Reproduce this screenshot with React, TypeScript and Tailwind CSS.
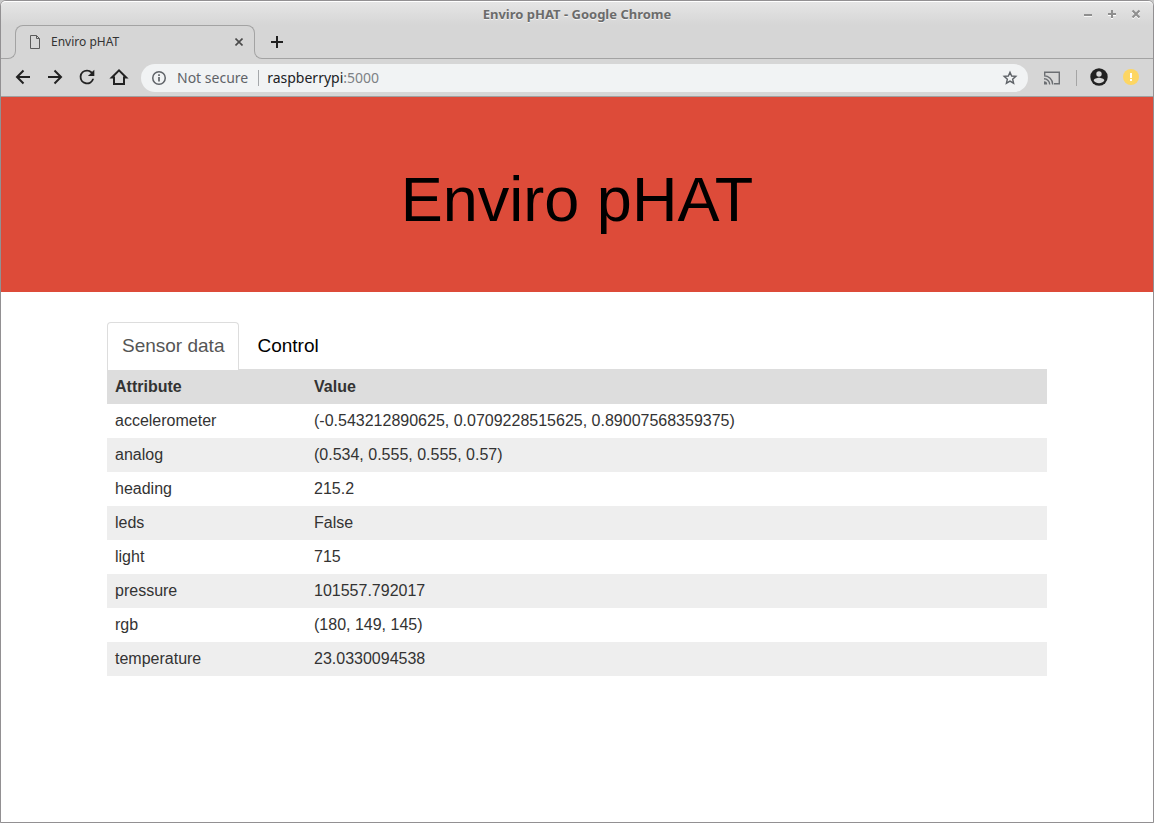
import { useState, type ReactNode } from "react";

const readings = [
  ["accelerometer", "(-0.543212890625, 0.0709228515625, 0.89007568359375)"],
  ["analog", "(0.534, 0.555, 0.555, 0.57)"],
  ["heading", "215.2"],
  ["leds", "False"],
  ["light", "715"],
  ["pressure", "101557.792017"],
  ["rgb", "(180, 149, 145)"],
  ["temperature", "23.0330094538"],
];

function IconButton({ label, children }: { label: string; children: ReactNode }) {
  return (
    <button type="button" aria-label={label} className="flex size-5 shrink-0 items-center justify-center">
      {children}
    </button>
  );
}

function WindowTitle() {
  return (
    <div className="flex h-[24px] items-center rounded-t-[5px] border-t border-white bg-linear-to-b from-[#e5e5e5] to-[#d6d6d6] px-[7px]">
      <div className="flex-1" />
      <div className="text-[13px] leading-5 font-bold text-[#6b6b6b] [text-shadow:0_1px_0_#f2f2f2]">
        Enviro pHAT - Google Chrome
      </div>
      <div className="flex flex-1 justify-end gap-1 text-[#8f8f8f]">
        <IconButton label="Minimize">
          <svg width="10" height="10" viewBox="0 0 10 10">
            <path d="M1 7h8" stroke="#fff" strokeWidth="1.5" />
            <path d="M1 6h8" stroke="currentColor" strokeWidth="2" />
          </svg>
        </IconButton>
        <IconButton label="Maximize">
          <svg width="10" height="10" viewBox="0 0 10 10">
            <path d="M1 6h8M5 2v8" stroke="#fff" strokeWidth="2" />
            <path d="M1 5h8M5 1v8" stroke="currentColor" strokeWidth="2" />
          </svg>
        </IconButton>
        <IconButton label="Close window">
          <svg width="10" height="10" viewBox="0 0 10 10">
            <path d="M1.5 2.5l7 7M8.5 2.5l-7 7" stroke="#fff" strokeWidth="2" />
            <path d="M1.5 1.500l7 7M8.5 1.500l-7 7" stroke="currentColor" strokeWidth="2.2" />
          </svg>
        </IconButton>
      </div>
    </div>
  );
}

function TabStrip() {
  return (
    <div>
      <div className="flex h-[25px] items-start pl-[14px]">
        <div className="h-full w-[240px] shrink-0 rounded-t-[8px] border-x border-t border-[#a3a3a3]">
          <div className="flex h-8 items-center pr-[5px] pl-[13px]">
            <svg width="12" height="14" viewBox="0 0 12 14" fill="none" stroke="#5a5a5a">
              <path d="M1.500 .5H7.500L10.500 3.500V13.500H1.500Z" />
              <path d="M7.500 .5V3.500H10.500" />
            </svg>
            <span className="ml-[10px] flex-1 text-[12px] leading-4 text-[#333]">Enviro pHAT</span>
            <IconButton label="Close tab">
              <svg width="8" height="8" viewBox="0 0 8 8">
                <path d="M.5 .5l7 7M7.500 .5l-7 7" stroke="#4a4a4a" strokeWidth="1.600" />
              </svg>
            </IconButton>
          </div>
        </div>
        <div className="flex h-[34px] items-center pl-3">
          <IconButton label="New tab">
            <svg width="12" height="12" viewBox="0 0 12 12">
              <path d="M0 6h12M6 0v12" stroke="#202020" strokeWidth="2" />
            </svg>
          </IconButton>
        </div>
      </div>
      <div className="flex h-[9px]">
        <div className="w-[15px] rounded-br-[8px] border-r border-b border-[#a3a3a3]" />
        <div className="w-[238px]" />
        <div className="flex-1 rounded-bl-[8px] border-b border-l border-[#a3a3a3]" />
      </div>
    </div>
  );
}

function Toolbar() {
  return (
    <div className="flex h-[38px] items-center border-b border-[#a0a0a0] px-3">
      <div className="flex gap-3 pb-[2px] text-[#222]">
        <IconButton label="Back">
          <svg width="20" height="20" viewBox="0 0 20 20" fill="none" stroke="currentColor" strokeWidth="2">
            <path d="M17 10H4M10.500 3.500L4 10l6.500 6.500" />
          </svg>
        </IconButton>
        <IconButton label="Forward">
          <svg width="20" height="20" viewBox="0 0 20 20" fill="none" stroke="currentColor" strokeWidth="2">
            <path d="M3 10h13M9.500 3.500L16 10l-6.500 6.500" />
          </svg>
        </IconButton>
        <IconButton label="Reload">
          <svg width="22" height="22" viewBox="0 0 24 24" className="shrink-0" fill="currentColor">
            <path d="M17.650 6.350A7.960 7.960 0 0 0 12 4a8 8 0 1 0 7.730 10h-2.080A6 6 0 1 1 12 6c1.660 0 3.140.69 4.220 1.780L13 11h7V4z" />
          </svg>
        </IconButton>
        <IconButton label="Home">
          <svg width="20" height="20" viewBox="0 0 20 20" fill="none" stroke="currentColor" strokeWidth="2">
            <path d="M2.800 10.500H5V17H15V10.500H17.200L10 3.300Z" />
          </svg>
        </IconButton>
      </div>
      <div className="ml-3 flex h-7 flex-1 items-center rounded-full bg-[#f1f3f4] pr-2 pl-[10px] text-[14px] leading-5 text-[#5f6368]">
        <svg width="16" height="16" viewBox="0 0 16 16" fill="none" stroke="#5f6368" strokeWidth="1.500">
          <circle cx="8" cy="8" r="6.250" />
          <path d="M8 7v4.500M8 4.300v1.700" strokeWidth="1.700" />
        </svg>
        <span className="ml-[10px]">Not secure</span>
        <div className="mr-2 ml-[10px] h-4 w-px bg-[#a5a8ab]" />
        <div className="flex-1">
          <a href="#sensor" className="text-[#202124]">
            raspberrypi<span className="text-[#7d8185]">:5000</span>
          </a>
        </div>
        <IconButton label="Bookmark this page">
          <svg width="16" height="16" viewBox="0 0 16 16" fill="none" stroke="#5f6368" strokeWidth="1.400">
            <path d="M8 2.200L9.650 6.050L13.800 6.400L10.650 9.150L11.600 13.200L8 11.050L4.400 13.200L5.350 9.150L2.200 6.400L6.350 6.050Z" />
          </svg>
        </IconButton>
      </div>
      <div className="ml-[14px] flex items-center">
        <IconButton label="Cast">
          <svg width="18" height="16" viewBox="0 0 18 16" fill="none" stroke="#6b6e72" strokeWidth="1.400">
            <path d="M1.700 5V2.200H16.300V13.800H11" />
            <path d="M1 5.800A8.700 8.700 0 0 1 9.700 14.500M1 8.800A5.700 5.700 0 0 1 6.700 14.500" />
            <path d="M1 11.300A3.200 3.200 0 0 1 4.200 14.500H1Z" fill="#6b6e72" stroke="none" />
          </svg>
        </IconButton>
        <div className="mr-3 ml-[14px] h-4 w-px bg-[#a5a5a5]" />
        <div className="flex gap-3 pb-[2px]">
          <IconButton label="Profile">
            <svg width="18" height="18" viewBox="0 0 18 18">
              <circle cx="9" cy="9" r="8.700" fill="#222" />
              <circle cx="9" cy="6" r="2.700" fill="#d6d6d6" />
              <path d="M3.700 12.400C3.800 10.600 7.200 9.700 9 9.700S14.200 10.600 14.300 12.400A6.400 6.400 0 0 1 3.700 12.400Z" fill="#d6d6d6" />
            </svg>
          </IconButton>
          <IconButton label="Update available">
            <svg width="16" height="16" viewBox="0 0 16 16">
              <circle cx="8" cy="8" r="8" fill="#fdd663" />
              <path d="M8 4v5M8 10v2" stroke="#fff" strokeWidth="2" />
            </svg>
          </IconButton>
        </div>
      </div>
    </div>
  );
}

export default function App() {
  const [tab, setTab] = useState("sensor");
  const tabClass = (active: boolean) =>
    active
      ? "relative h-12 rounded-t-[4px] border border-b-0 border-[#ddd] bg-white px-[14px] pb-px text-[19px] text-[#555]"
      : "relative h-12 rounded-t-[4px] border border-b-0 border-transparent px-[14px] pb-px text-[19px] text-black";

  return (
    <div className="bg-[#c8c8c8]">
      <div className="flex min-h-screen flex-col rounded-t-[6px] border border-[#929092] bg-white">
        <header className="rounded-t-[5px] bg-[#d6d6d6] font-['Noto_Sans',sans-serif]">
          <WindowTitle />
          <TabStrip />
          <Toolbar />
        </header>
        <main className="font-['Liberation_Sans',Arial,sans-serif]">
          <div className="mb-[30px] flex h-[195px] items-center justify-center bg-[#dd4b39] pt-[10px]">
            <h1 className="text-[63px] leading-[69px] text-black">Enviro pHAT</h1>
          </div>
          <div className="mx-auto max-w-[940px]">
            <div role="tablist" className="-mb-px flex gap-[3px]">
              <button type="button" role="tab" aria-selected={tab === "sensor"} onClick={() => setTab("sensor")} className={tabClass(tab === "sensor")}>
                Sensor data
              </button>
              <button type="button" role="tab" aria-selected={tab === "control"} onClick={() => setTab("control")} className={tabClass(tab === "control")}>
                Control
              </button>
            </div>
            <div className="border-t border-[#ddd]">
              {tab === "sensor" && (
                <table className="w-full table-fixed border-collapse text-left text-[16px] leading-[18px] text-[#333]">
                  <thead>
                    <tr className="bg-[#ddd]">
                      <th className="w-[199px] p-2">Attribute</th>
                      <th className="p-2">Value</th>
                    </tr>
                  </thead>
                  <tbody>
                    {readings.map(([name, value]) => (
                      <tr key={name} className="even:bg-[#eee]">
                        <td className="p-2">{name}</td>
                        <td className="p-2">{value}</td>
                      </tr>
                    ))}
                  </tbody>
                </table>
              )}
            </div>
          </div>
        </main>
      </div>
    </div>
  );
}
